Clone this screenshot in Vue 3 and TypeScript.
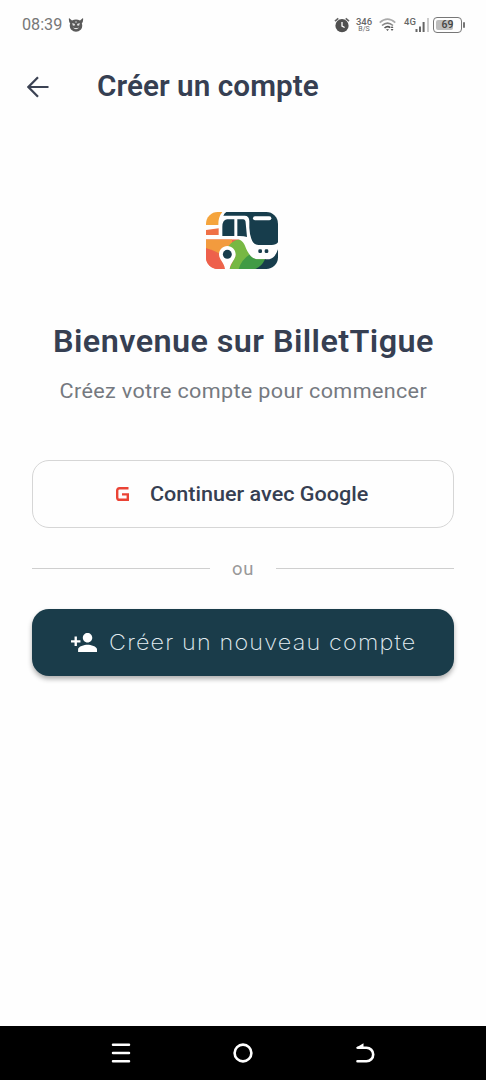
<script setup lang="ts">
import { ref } from 'vue'

const time = ref('08:39')
const rate = ref({ value: '346', unit: 'B/S' })
const battery = ref(69)
</script>

<template>
  <div class="screen">
    <header class="status">
      <span class="time">{{ time }}</span>
      <svg class="devil" viewBox="0 0 16 16" width="16" height="16">
        <path d="M1 1 L4 3.600 Q8 1.600 12 3.600 L15 1 Q15.600 4 13.800 6.500 Q15 9.500 13 12.500 Q8 17 3 12.500 Q1 9.500 2.200 6.500 Q.400 4 1 1Z" fill="#5a5a5a" />
        <path d="M4.200 6 L7 7 L6.500 8.800 L4.800 8.500Z M11.800 6 L9 7 L9.500 8.800 L11.200 8.500Z M4.800 10.500 Q8 11.500 11.200 10.500 Q8 14 4.800 10.500Z M7.600 4 H8.400 V6 H7.600Z" fill="#e4e4e4" />
      </svg>
      <span class="grow"></span>
      <svg class="alarm" viewBox="0 0 16 16" width="16" height="16">
        <circle cx="8" cy="8.700" r="6.600" fill="#505050" />
        <path d="M1 4.200 L4.300 1.400 M15 4.200 L11.700 1.400" stroke="#666" stroke-width="1.700" />
        <path d="M8 5 V9 L10.600 10.500" fill="none" stroke="#fff" stroke-width="1.300" />
      </svg>
      <div class="rate"><b>{{ rate.value }}</b><span>{{ rate.unit }}</span></div>
      <svg class="wifi" viewBox="0 0 17 14" width="17" height="14">
        <g fill="none" stroke-width="1.600">
          <path d="M.700 4.700 Q8.500 -2.300 16.300 4.700" stroke="#aaa" />
          <path d="M3 7.500 Q8.500 2.700 14 7.500" stroke="#858585" />
          <path d="M5.500 10 Q8.500 7.300 11.300 9.700" stroke="#555" />
        </g>
        <path d="M7 11.300 H10 L8.500 13Z M13 8 L14.500 10 H11.700Z M11.700 11 H14.500 L13 13Z" fill="#555" />
      </svg>
      <span class="net">4G</span>
      <svg class="signal" viewBox="0 0 15 15" width="15" height="15">
        <path d="M1.500 12 V15 M5 9.500 V15 M8.600 5 V15" stroke="#666" stroke-width="2" />
        <path d="M13 1 V15" stroke="#ccc" stroke-width="2" />
      </svg>
      <div class="battery"><i :style="{ width: battery * 0.24 + 'px' }"></i><b>{{ battery }}</b></div>
    </header>

    <nav class="appbar">
      <svg viewBox="0 0 22 22" width="22" height="22">
        <path d="M21.500 11 H1.800 M11 1.200 L1.400 11 L11 20.800" fill="none" stroke="#3b4253" stroke-width="2.200" />
      </svg>
      <h1>Créer un compte</h1>
    </nav>

    <main>
      <svg class="logo" viewBox="42 36 216 171" width="72" height="57">
        <defs>
          <clipPath id="badge"><rect x="42" y="36" width="216" height="171" rx="35" /></clipPath>
          <clipPath id="body"><path d="M42 118 H134 C158 118 158 143 170 160 C178 174 188 178 202 178 H240 V207 H42Z" /></clipPath>
        </defs>
        <g clip-path="url(#badge)">
          <path d="M42 36 H91 Q78 52 79 75 H42Z" fill="#f5a43c" />
          <path d="M42 90 L80 85 V105 H42Z" fill="#ef7046" />
          <g clip-path="url(#body)">
            <rect x="42" y="110" width="100" height="100" fill="#ed654b" />
            <path d="M42 118 H120 V175 Q80 160 72 155 Q60 148 42 148Z" fill="#f29b3e" />
            <path d="M42 144 Q78 154 90 207 H42Z" fill="#ee604c" />
            <path d="M151 117 A51 51 0 0 0 109 139 L131 165 L112 207 H220 V117Z" fill="#77b843" />
            <path d="M140 207 Q150 174 184 157 L222 178 Q215 200 190 207Z" fill="#419b45" />
          </g>
          <path d="M190 207 Q209 200 219 178 H232 Q250 173 258 148 V207Z" fill="#173d4c" />
          <path d="M103 36 H258 V127 Q252 135 239 135 H199 Q184 134 178 116 Q173 103 172 83 V64 Q172 47 158 47 H94 Q97 40 103 36Z" fill="#173d4c" />
          <path d="M105 58 H127 V108 H91 V80 Q91 61 105 58Z M136 58 H153 Q161 59 161 68 L165 111 Q154 107 136 108Z" fill="#173d4c" />
          <rect x="183" y="49" width="55" height="12" rx="6" fill="#fff" />
          <rect x="199" y="148" width="11" height="11" rx="4" fill="#173d4c" />
          <rect x="218" y="148" width="11" height="11" rx="4" fill="#173d4c" />
          <path d="M106 138 C92 138 81 149 81 163 C81 179 96 187 99 207 H113 C116 187 131 179 131 163 C131 149 120 138 106 138Z" fill="#fff" />
          <circle cx="106" cy="163" r="13.500" fill="#173d4c" />
        </g>
      </svg>

      <h2>Bienvenue sur BilletTigue</h2>
      <p class="sub">Créez votre compte pour commencer</p>

      <button class="google">
        <svg viewBox="0 0 13 14" width="13" height="14">
          <path d="M12.500 1.200 H3.600 Q1.200 1.200 1.200 3.600 V10.400 Q1.200 12.800 3.600 12.800 H11.800 V7.400 H6" fill="none" stroke="#ea4335" stroke-width="2.400" />
        </svg>
        <span>Continuer avec Google</span>
      </button>

      <div class="divider"><i></i><span>ou</span><i></i></div>

      <button class="create">
        <svg viewBox="1 4 22 16" width="26" height="19">
          <path d="M15 12c2.210 0 4-1.790 4-4s-1.790-4-4-4-4 1.790-4 4 1.790 4 4 4zm-9-2V7H4v3H1v2h3v3h2v-3h3v-2H6zm9 4c-2.670 0-8 1.340-8 4v2h16v-2c0-2.660-5.330-4-8-4z" fill="#fff" />
        </svg>
        <span>Créer un nouveau compte</span>
      </button>
    </main>

    <footer>
      <svg viewBox="0 0 20 20" width="20" height="20"><path d="M2 1.800 H18 M2 10 H18 M2 18.200 H18" stroke="#fff" stroke-width="2.500" stroke-linecap="round" /></svg>
      <svg viewBox="0 0 20 20" width="20" height="20"><circle cx="10" cy="10" r="8.400" fill="none" stroke="#fff" stroke-width="2.600" /></svg>
      <svg viewBox="0 0 20 20" width="20" height="20">
        <path d="M3 4.800 H11.500 A6.700 6.700 0 0 1 11.500 18.200 H2.500" fill="none" stroke="#fff" stroke-width="2.600" stroke-linecap="round" />
        <path d="M1 4.800 L8.500 .200 V5.500 H1.500Z" fill="#fff" />
      </svg>
    </footer>
  </div>
</template>

<style>
body { margin: 0; background: #fefefe; }
</style>

<style scoped>
.screen {
  width: 486px;
  height: 1080px;
  display: flex;
  flex-direction: column;
  background: #fefefe;
  font-family: Roboto, "Liberation Sans", sans-serif;
  color: #363f52;
  overflow: hidden;
}
svg { display: block; flex: none; }
.status {
  height: 49px;
  flex: none;
  display: flex;
  align-items: center;
  padding: 0 20px 0 22px;
  color: #666;
}
.time { font-size: 16.200px; width: 40px; color: #777; white-space: nowrap; }
.devil { margin-left: 6px; }
.grow { flex: 1; }
.rate {
  width: 16px;
  margin-left: 6px;
  display: flex;
  flex-direction: column;
  align-items: center;
  font-size: 9.500px;
  line-height: 9px;
}
.rate b { font-weight: 500; }
.rate span { font-size: 7px; line-height: 7px; }
.wifi { margin-left: 7px; }
.net { font-size: 9.500px; font-weight: 500; margin: 0 0 6px 8px; width: 11px; line-height: 9px; }
.signal { margin: 0; }
.battery {
  position: relative;
  box-sizing: border-box;
  width: 29px;
  height: 16px;
  margin-left: 3px;
  margin-right: 4px;
  border: 1.500px solid #777;
  border-radius: 4px;
  padding: 2px;
}
.battery::after {
  content: "";
  position: absolute;
  right: -4px;
  top: 4px;
  width: 2px;
  height: 6px;
  background: #777;
  border-radius: 1px;
}
.battery i { display: block; height: 100%; background: #bdbdbd; border-radius: 2px; }
.battery b {
  position: absolute;
  inset: 0;
  text-align: center;
  font-size: 10.500px;
  line-height: 14px;
  font-weight: 500;
  color: #444;
}
.appbar {
  height: 75px;
  flex: none;
  display: flex;
  align-items: center;
  padding-left: 27px;
  gap: 48px;
}
h1 {
  margin: 0 0 1px;
  font-size: 28.600px;
  font-weight: 600;
  line-height: 36px;
  letter-spacing: 0.050px;
  white-space: nowrap;
  transform: scaleX(1.038);
  transform-origin: left;
}
main {
  flex: 1;
  display: flex;
  flex-direction: column;
  align-items: center;
  padding: 88px 32px 0;
}
.logo { margin-right: 2px; }
h2 {
  margin: 53px 0 0;
  font-size: 31.200px;
  line-height: 40px;
  font-weight: 600;
  letter-spacing: 0.410px;
  white-space: nowrap;
  transform: scaleX(1.038);
}
.sub {
  margin: 15px 0 0;
  font-size: 20.600px;
  line-height: 28px;
  letter-spacing: 0.330px;
  color: #757980;
  white-space: nowrap;
  transform: scaleX(1.048);
}
button {
  box-sizing: border-box;
  width: 422px;
  height: 68px;
  flex: none;
  padding: 0;
  border-radius: 17px;
  display: flex;
  align-items: center;
  justify-content: center;
  font-family: inherit;
  white-space: nowrap;
}
.google {
  margin-top: 55px;
  border: 1.500px solid #d6d6d6;
  background: transparent;
  color: #363f52;
  gap: 21px;
  padding-right: 11px;
  font-size: 20.600px;
  font-weight: 500;
}
.google span { transform: scaleX(1.048); transform-origin: left; }
.divider {
  width: 422px;
  height: 24px;
  margin-top: 28px;
  display: flex;
  align-items: center;
  justify-content: space-between;
  color: #999;
  font-size: 18.400px;
  letter-spacing: 0.700px;
}
.divider i { width: 178px; height: 1px; background: #cfcfcf; }
.create {
  margin-top: 29px;
  height: 67px;
  border: 0;
  background: #1a3c4a;
  color: #e3edf2;
  box-shadow: 0 3px 5px rgba(0, 0, 0, 0.32);
  font-family: Inter, sans-serif;
  font-size: 22px;
  font-weight: 200;
  letter-spacing: 1.100px;
  gap: 12px;
}
.create span { margin: 0 17px 2px 0; transform: scaleX(1.063); transform-origin: left; }
footer {
  height: 54px;
  flex: none;
  background: #000;
  display: flex;
  align-items: center;
  justify-content: center;
  gap: 102px;
}
</style>
